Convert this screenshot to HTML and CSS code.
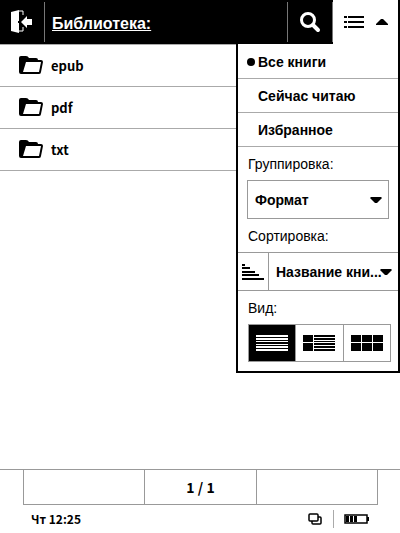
FILE: index.html
```html
<!DOCTYPE html>
<html lang="ru">
<head>
    <meta charset="UTF-8">
    <meta name="viewport" content="width=device-width, initial-scale=1.0">
    <title>Библиотека</title>
    <link rel="stylesheet" href="styles.css">
</head>
<body>
    <header class="topbar">
        <button class="exit" aria-label="Выход">
            <svg width="22" height="24" viewBox="0 0 22 24" fill="#fff">
                <path d="M0 2l8-2v23L0 21z"/>
                <path d="M8 1h4v4M8 21h4v-4" fill="none" stroke="#fff" stroke-width="1"/>
                <path d="M10 12l6-6v3h5v6h-5v3z"/>
                <path d="M7 11h1v2H7z" fill="#000"/>
            </svg>
        </button>
        <a href="#" class="title">Библиотека:</a>
        <button class="search" aria-label="Поиск">
            <svg width="22" height="22" viewBox="0 0 22 22" fill="none" stroke="#fff">
                <circle cx="9" cy="9" r="6.5" stroke-width="3"/>
                <path d="M14 14l5 5" stroke-width="4" stroke-linecap="round"/>
            </svg>
        </button>
        <button class="menu-toggle" aria-label="Меню">
            <svg width="20" height="12" viewBox="0 0 20 12">
                <path d="M0 0h3v2H0zM4 0h16v2H4zM0 5h3v2H0zM4 5h16v2H4zM0 10h3v2H0zM4 10h16v2H4z"/>
            </svg>
            <svg width="12" height="6" viewBox="0 0 12 6"><path d="M0 6V5l5-5h2l5 5v1z"/></svg>
        </button>
    </header>

    <main class="content">
        <ul class="folders">
            <li><a href="#">
                <svg class="folder" viewBox="0 0 24 18">
                    <path d="M0 2q0-2 2-2h5q2 0 3 2h7q2 0 2 2h3q2 0 2 2l-2 10q0 2-2 2H2q-2 0-2-2z"/>
                    <path d="M7 6h15l-2 10H4z" fill="#fff"/>
                </svg>epub</a></li>
            <li><a href="#">
                <svg class="folder" viewBox="0 0 24 18">
                    <path d="M0 2q0-2 2-2h5q2 0 3 2h7q2 0 2 2h3q2 0 2 2l-2 10q0 2-2 2H2q-2 0-2-2z"/>
                    <path d="M7 6h15l-2 10H4z" fill="#fff"/>
                </svg>pdf</a></li>
            <li><a href="#">
                <svg class="folder" viewBox="0 0 24 18">
                    <path d="M0 2q0-2 2-2h5q2 0 3 2h7q2 0 2 2h3q2 0 2 2l-2 10q0 2-2 2H2q-2 0-2-2z"/>
                    <path d="M7 6h15l-2 10H4z" fill="#fff"/>
                </svg>txt</a></li>
        </ul>

        <aside class="menu">
            <label class="filter"><input type="radio" name="filter" checked>Все книги</label>
            <label class="filter"><input type="radio" name="filter">Сейчас читаю</label>
            <label class="filter"><input type="radio" name="filter">Избранное</label>

            <label class="caption" for="group">Группировка:</label>
            <div class="group">
                <select id="group"><option>Формат</option></select>
                <svg class="arrow" viewBox="0 0 12 6"><path d="M1 0h10l1 1-5 5H5L0 1z"/></svg>
            </div>

            <label class="caption" for="sort">Сортировка:</label>
            <div class="sort">
                <button class="order" aria-label="Порядок">
                    <svg width="22" height="16" viewBox="0 0 22 16">
                        <path d="M0 0h3v2H0zM0 3h8v2H0zM0 7h13v2H0zM0 10h17v2H0zM0 14h22v2H0z"/>
                    </svg>
                </button>
                <div class="sort-by">
                    <select id="sort"><option>Название кни...</option></select>
                    <svg class="arrow" viewBox="0 0 12 6"><path d="M1 0h10l1 1-5 5H5L0 1z"/></svg>
                </div>
            </div>

            <p class="caption">Вид:</p>
            <div class="views">
                <button class="active" aria-label="Список">
                    <svg width="32" height="16" viewBox="0 0 32 16" fill="#fff">
                        <path d="M0 0h32v2H0zM0 3h32v2H0zM0 6h32v1H0zM0 9h32v1H0zM0 11h32v2H0zM0 14h32v2H0z"/>
                    </svg>
                </button>
                <button aria-label="Подробно">
                    <svg width="32" height="16" viewBox="0 0 32 16">
                        <path d="M0 0h10v7H0zM0 8h10v8H0zM11 0h21v2H11zM11 3h21v2H11zM11 6h21v1H11zM11 8h21v2H11zM11 11h21v2H11zM11 14h21v2H11z"/>
                    </svg>
                </button>
                <button aria-label="Обложки">
                    <svg width="32" height="16" viewBox="0 0 32 16">
                        <path d="M0 0h10v7H0zM11 0h10v7H11zM22 0h10v7H22zM0 8h10v8H0zM11 8h10v8H11zM22 8h10v8H22z"/>
                    </svg>
                </button>
            </div>
        </aside>
    </main>

    <footer>
        <nav class="pager">
            <button aria-label="Назад"></button>
            <span>1 / 1</span>
            <button aria-label="Вперёд"></button>
        </nav>
        <div class="status">
            <span class="clock">Чт 12:25</span>
            <svg width="14" height="12" viewBox="0 0 14 12" fill="#fff" stroke="#000">
                <rect x="4" y="4" width="9" height="7" rx="1" stroke-width="1.5"/>
                <rect x="1" y="1" width="9" height="7" rx="1" stroke-width="1.5"/>
            </svg>
            <span class="battery">
                <svg width="25" height="10" viewBox="0 0 25 10">
                    <rect x="1" y="1" width="22" height="8" fill="none" stroke="#000" stroke-width="1.5"/>
                    <path d="M2 2h3v6H2zM6 2h3v6H6zM10 2h3v6h-3zM23 3h2v4h-2z"/>
                </svg>
            </span>
        </div>
    </footer>
</body>
</html>
```
FILE: styles.css
```css
* {
    box-sizing: border-box;
}
body {
    display: flex;
    flex-direction: column;
    min-height: 100vh;
    margin: 0;
    background: #fff;
    color: #000;
    font: bold 14px "Liberation Sans", Arial, sans-serif;
}
button {
    display: flex;
    justify-content: center;
    align-items: center;
    padding: 0;
    border: none;
    background: none;
    cursor: pointer;
}
a {
    color: inherit;
}
.topbar {
    display: flex;
    align-items: stretch;
    height: 44px;
    background: #000;
    color: #fff;
}
.exit,
.search {
    width: 45px;
    margin: 2px 0;
    border-right: 1px solid #777;
}
.title {
    flex: 1;
    padding: 0 7px;
    font-size: 16px;
    line-height: 48px;
}
.search {
    width: 46px;
    border-left: 1px solid #777;
}
.menu-toggle {
    gap: 12px;
    width: 67px;
    border-right: 2px solid #000;
    background: #fff;
}
.content {
    display: flex;
    flex: 1;
    align-items: flex-start;
}
.folders {
    flex: 1;
    margin: 0;
    padding: 0;
    border-top: 1px solid #aaa;
    list-style: none;
}
.folders li {
    border-bottom: 1px solid #aaa;
}
.folders a {
    display: flex;
    align-items: center;
    gap: 8px;
    height: 41px;
    padding-left: 19px;
    font: bold 13px/20px "Noto Sans CJK SC", sans-serif;
    text-decoration: none;
}
.folder {
    width: 24px;
    height: 18px;
    margin-bottom: 2px;
}
.menu {
    width: 164px;
    padding: 1px 0 9px;
    border: 2px solid #000;
    border-top: none;
}
.filter {
    display: flex;
    align-items: center;
    gap: 3px;
    height: 34px;
    padding-left: 9px;
    border-bottom: 1px solid #aaa;
}
.filter input {
    appearance: none;
    width: 8px;
    height: 8px;
    margin: 0;
    border-radius: 50%;
}
.filter input:checked {
    background: #000;
}
.caption {
    display: block;
    margin: 0;
    padding: 2px 10px 0;
    font-weight: normal;
    line-height: 31px;
}
.group {
    position: relative;
    height: 39px;
    margin: 0 9px;
    border: 1px solid #999;
}
select {
    appearance: none;
    width: 100%;
    height: 100%;
    padding: 0 7px;
    border: none;
    background: none;
    color: inherit;
    font: inherit;
}
.arrow {
    position: absolute;
    top: 16px;
    right: 6px;
    width: 12px;
    height: 6px;
    pointer-events: none;
}
.sort {
    display: flex;
    height: 39px;
    border: 1px solid #999;
    border-width: 1px 0;
}
.order {
    width: 31px;
    border-right: 1px solid #999;
}
.sort-by {
    position: relative;
    flex: 1;
    min-width: 0;
}
.views {
    display: flex;
    height: 38px;
    margin: 0 7px 0 10px;
    border: 1px solid #999;
}
.views button {
    flex: 1;
    border-left: 1px solid #999;
}
.views .active {
    border: none;
    background: #000;
}
footer {
    border-top: 1px solid #999;
}
.pager {
    display: grid;
    grid-template-columns: 120fr 114fr 120fr;
    height: 35px;
    margin: 0 22px 0 23px;
    border: 1px solid #999;
    border-top: none;
}
.pager span {
    border: 1px solid #999;
    border-width: 0 1px;
    font: bold 14px "Noto Sans CJK SC", sans-serif;
    line-height: 34px;
    text-align: center;
}
.status {
    display: flex;
    align-items: center;
    height: 28px;
    padding: 0 31px;
}
.clock {
    flex: 1;
    padding-bottom: 2px;
    font: bold 12px "Noto Sans CJK SC", sans-serif;
}
.battery {
    display: flex;
    align-items: center;
    height: 18px;
    margin-left: 11px;
    padding-left: 10px;
    border-left: 1px solid #aaa;
}
```
